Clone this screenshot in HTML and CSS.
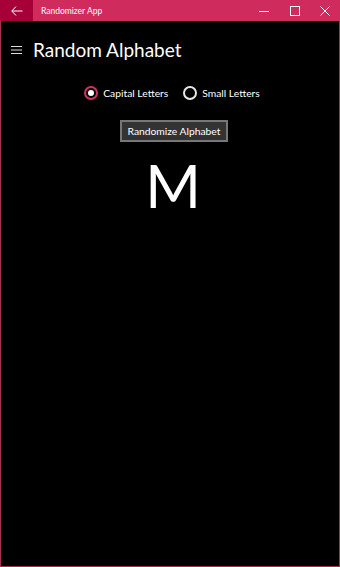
FILE: index.html
```html
<!DOCTYPE html>
<html>
<head>
<meta charset="utf-8">
<link rel="stylesheet" href="styles.css">
</head>
<body>
<div class="window">
  <div class="titlebar">
    <div class="back">
      <svg width="12" height="10" viewBox="0 0 12 10"><path d="M5 0.5 L0.8 5 L5 9.5 M0.8 5 H11.5" fill="none" stroke="#fff" stroke-width="1"/></svg>
    </div>
    <div class="title">Randomizer App</div>
    <div class="controls">
      <div class="ctl"><svg width="10" height="10" viewBox="0 0 10 10"><path d="M0 5.5 H10" stroke="#fff" stroke-width="1"/></svg></div>
      <div class="ctl"><svg width="10" height="10" viewBox="0 0 10 10"><rect x="0.5" y="0.5" width="9" height="9" fill="none" stroke="#fff" stroke-width="1"/></svg></div>
      <div class="ctl"><svg width="10" height="10" viewBox="0 0 10 10"><path d="M0.5 0.5 L9.5 9.5 M9.5 0.5 L0.5 9.5" stroke="#fff" stroke-width="1"/></svg></div>
    </div>
  </div>
  <div class="content">
    <div class="header">
      <svg class="burger" width="11" height="8" viewBox="0 0 11 8"><path d="M0 0.5 H11 M0 4 H11 M0 7.5 H11" stroke="#ddd" stroke-width="1"/></svg>
      <h1 class="heading">Random Alphabet</h1>
    </div>
    <div class="radios">
      <label class="radio"><span class="circle checked"><span class="dot"></span></span><span>Capital Letters</span></label>
      <label class="radio"><span class="circle"></span><span>Small Letters</span></label>
    </div>
    <div class="btnrow"><button class="btn">Randomize Alphabet</button></div>
    <div class="letter">M</div>
  </div>
</div>
</body>
</html>
```
FILE: styles.css
```css
html, body {
  margin: 0;
  padding: 0;
  background: #000;
}
body {
  width: 340px;
  height: 567px;
  overflow: hidden;
  font-family: Lato, "Open Sans", sans-serif;
}
.window {
  box-sizing: border-box;
  width: 340px;
  height: 567px;
  border: 1px solid #a8304f;
  border-top: none;
  background: #000;
  display: flex;
  flex-direction: column;
}
.titlebar {
  height: 21px;
  background: #cf2b5d;
  display: flex;
  align-items: center;
  margin: 0 -1px;
}
.back {
  width: 33px;
  height: 21px;
  background: #a70038;
  display: flex;
  align-items: center;
  justify-content: center;
}
.title {
  color: #fff;
  font-size: 8.5px;
  margin-left: 8px;
  flex: 1;
}
.controls {
  display: flex;
  height: 21px;
}
.ctl {
  width: 31px;
  display: flex;
  align-items: center;
  justify-content: center;
}
.controls .ctl:last-child {
  width: 30px;
}
.content {
  flex: 1;
  display: flex;
  flex-direction: column;
}
.header {
  display: flex;
  align-items: center;
  height: 56px;
  padding-left: 10px;
}
.burger {
  margin-right: 11px;
  margin-top: 1px;
}
.heading {
  margin: 0;
  font-weight: 400;
  font-size: 19px;
  color: #fff;
}
.radios {
  display: flex;
  justify-content: center;
  gap: 15px;
  margin-top: 5px;
  padding-left: 4px;
  height: 22px;
  align-items: center;
}
.radio {
  display: flex;
  align-items: center;
  gap: 5px;
  color: #fff;
  font-size: 10.3px;
}
.circle {
  box-sizing: border-box;
  width: 14px;
  height: 14px;
  border-radius: 50%;
  border: 2px solid #e8e8e8;
  display: flex;
  align-items: center;
  justify-content: center;
}
.circle.checked {
  border-color: #d0306a;
}
.dot {
  width: 6px;
  height: 6px;
  border-radius: 50%;
  background: #fff;
}
.btnrow {
  display: flex;
  justify-content: center;
  margin-top: 16px;
  padding-left: 8px;
}
.btn {
  box-sizing: border-box;
  height: 22px;
  padding: 0 6px;
  background: #333;
  color: #fff;
  border: 2px solid #777;
  font-family: Lato, "Open Sans", sans-serif;
  font-size: 10.3px;
}
.letter {
  text-align: center;
  color: #fff;
  font-size: 60px;
  line-height: 1;
  margin-top: 13px;
  padding-left: 6px;
}
```
